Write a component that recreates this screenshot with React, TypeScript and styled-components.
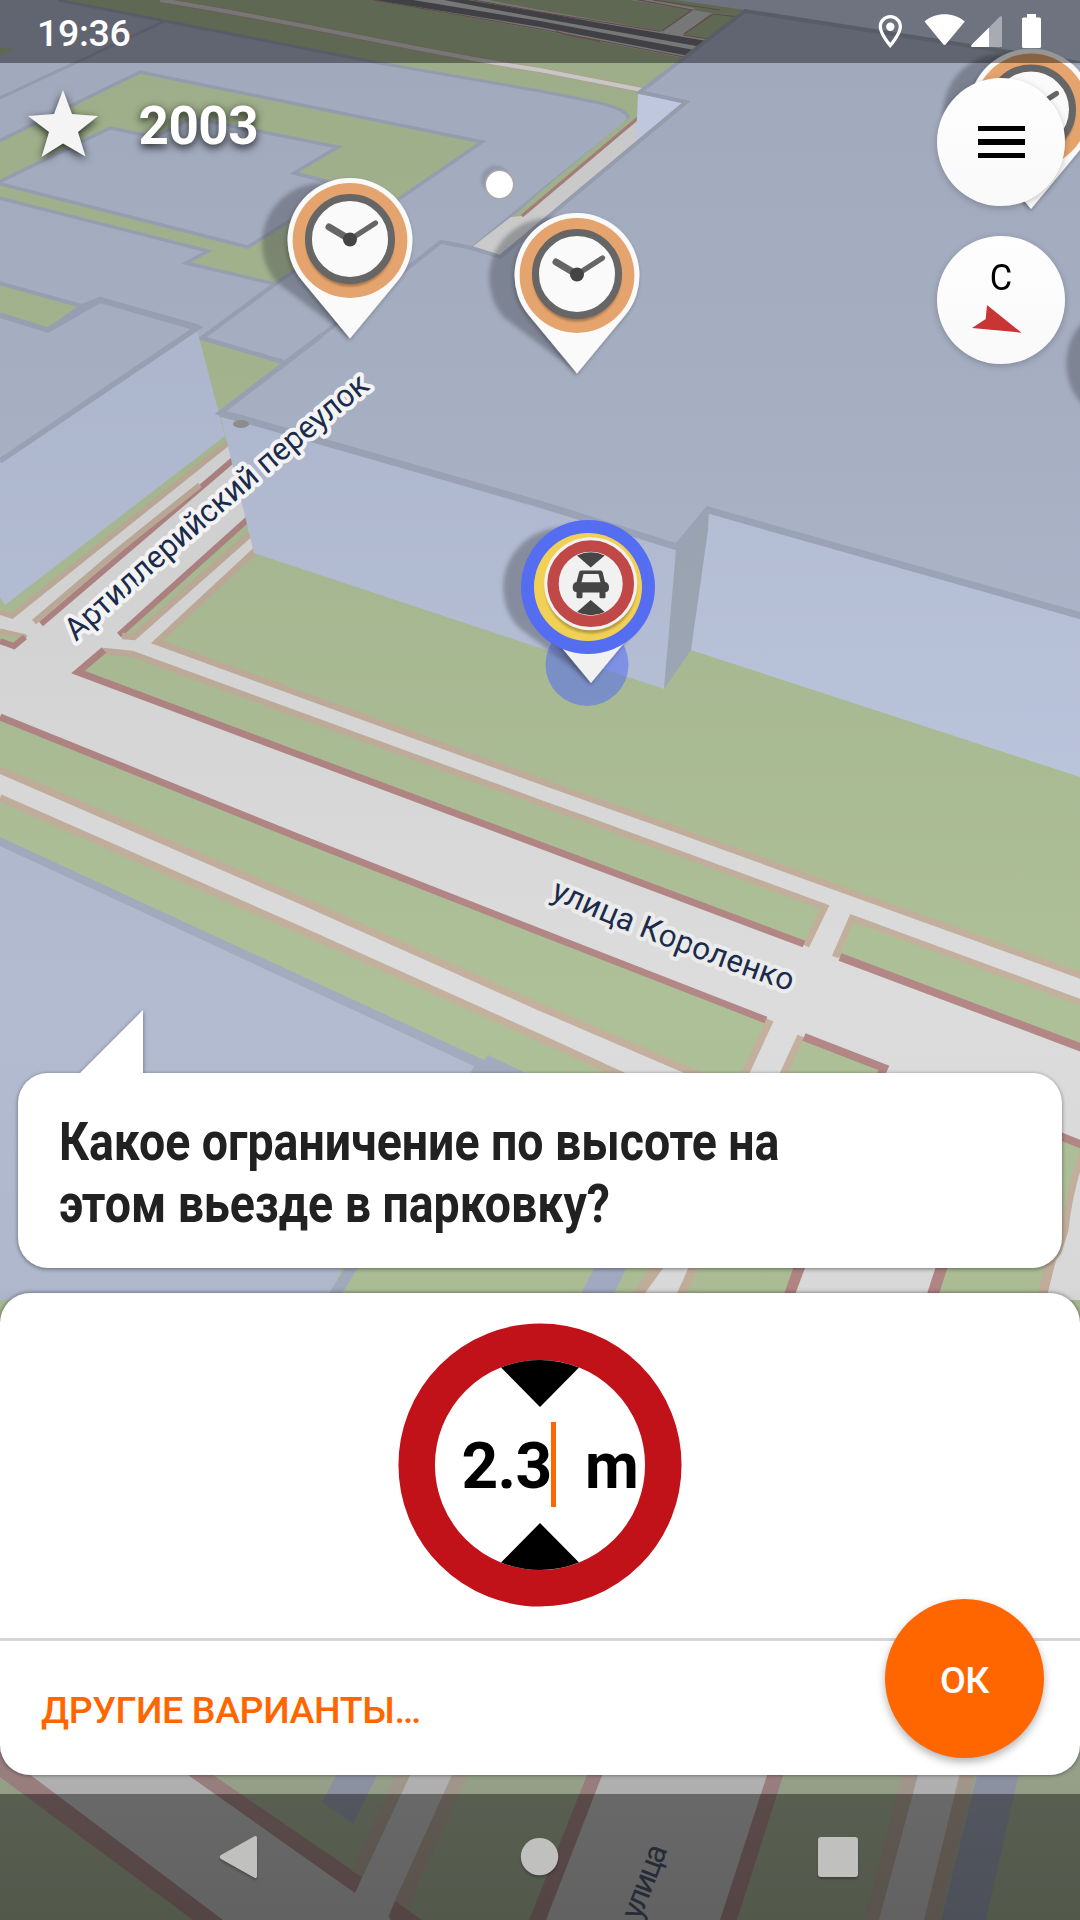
import React from "react";
import styled, { createGlobalStyle } from "styled-components";

const GlobalStyle = createGlobalStyle`
  *, *::before, *::after { box-sizing: border-box; }
  body { margin: 0; background: #aec098; }
`;

const color = {
  grass: "#aec098",
  road: "#dcdcdc",
  curb: "#b38786",
  walk: "#c3b09d",
  roof: "#b2bbd0",
  roofEdge: "#a3abbf",
  wall: "#bac4dc",
  wallFar: "#bec8e0",
  water: "#a3acc4",
  accent: "#ff6600",
};

const Screen = styled.main`
  position: relative;
  display: flex;
  flex-direction: column;
  width: 1080px;
  height: 1920px;
  overflow: hidden;
  font-family: Roboto, "Noto Sans", sans-serif;
  color: #212121;
`;

const MapCanvas = styled.svg`
  position: absolute;
  inset: 0;
  z-index: 0;
  width: 1080px;
  height: 1920px;
`;

const StatusBar = styled.header`
  position: relative;
  z-index: 1;
  display: flex;
  align-items: center;
  justify-content: space-between;
  flex: none;
  height: 63px;
  padding: 3px 38px 0 37px;
  background: rgba(0, 0, 0, 0.4);
  color: #fff;
`;

const Clock = styled.time`
  font-size: 37.5px;
  font-weight: 500;
  line-height: 60px;
  letter-spacing: -0.35px;
`;

const StatusIcons = styled.svg`
  width: 166px;
  height: 40px;
  margin-top: -3px;
`;

const Hud = styled.section`
  position: relative;
  z-index: 1;
  display: flex;
  justify-content: space-between;
  align-items: flex-start;
  padding: 15px 15px 0 20px;
`;

const Score = styled.div`
  display: flex;
  align-items: center;
  gap: 31.5px;
  height: 96px;
`;

const StarIcon = styled.svg`
  width: 87px;
  height: 96px;
  overflow: visible;
  filter: drop-shadow(0 3px 4px rgba(0, 0, 0, 0.75));
`;

const ScoreValue = styled.span`
  font-size: 53px;
  font-weight: 700;
  line-height: 96px;
  color: #fff;
  letter-spacing: -0.5px;
  text-shadow: 0 3px 8px rgba(0, 0, 0, 0.85);
`;

const Controls = styled.div`
  display: flex;
  flex-direction: column;
  gap: 30px;
`;

const RoundButton = styled.button`
  display: flex;
  flex-direction: column;
  align-items: center;
  justify-content: center;
  width: 128px;
  height: 128px;
  padding: 0;
  border: 0;
  border-radius: 50%;
  background: linear-gradient(#fefefe, #f9f9f9);
  box-shadow: 0 2px 7px rgba(0, 0, 0, 0.22);
  color: #000;
`;

const MenuBars = styled.span`
  display: flex;
  flex-direction: column;
  gap: 8px;
  width: 47px;
`;

const Bar = styled.span`
  height: 5.4px;
  background: #000;
`;

const North = styled.span`
  font: 400 37px/38px Roboto, sans-serif;
  transform: scaleX(0.93);
`;

const Needle = styled.svg`
  width: 54px;
  height: 36px;
  margin: 4px 0;
  overflow: visible;
`;

const Dialog = styled.section`
  position: relative;
  z-index: 1;
  display: flex;
  flex-direction: column;
  gap: 24.5px;
  margin-top: auto;
  margin-bottom: 19px;
`;

const Bubble = styled.div`
  position: relative;
  height: 195px;
  margin: 0 18px;
  padding: 38px 41px;
  border-radius: 30px;
  background: #fff;
  filter: drop-shadow(0 1px 2px rgba(0, 0, 0, 0.45));

  &::before {
    content: "";
    position: absolute;
    left: 61px;
    bottom: calc(100% - 1px);
    width: 64px;
    height: 64px;
    background: #fff;
    clip-path: polygon(100% 0, 100% 100%, 0 100%);
  }
`;

const Question = styled.h1`
  margin: 0;
  width: 1060px;
  font-size: 54px;
  font-weight: 700;
  line-height: 62px;
  white-space: pre-line;
  transform: scaleX(0.86);
  transform-origin: left;
`;

const Panel = styled.div`
  position: relative;
  display: flex;
  flex-direction: column;
  height: 482.5px;
  border-radius: 30px;
  background: #fff;
  box-shadow: 0 0 4px rgba(0, 0, 0, 0.5);
`;

const Answer = styled.div`
  display: flex;
  justify-content: center;
  height: 348.5px;
  padding-top: 30.5px;
  border-bottom: 3px solid #d6d6d6;
`;

const Sign = styled.div`
  display: grid;
  width: 284px;
  height: 284px;

  > * {
    grid-area: 1 / 1;
  }
`;

const Reading = styled.div`
  display: flex;
  align-items: center;
  padding-left: 63.5px;
  font-size: 64px;
  font-weight: 700;
  color: #000;
  white-space: pre;
`;

const Figure = styled.span`
  width: 89px;
  padding-top: 2px;
  letter-spacing: -0.6px;
`;

const Caret = styled.i`
  width: 5px;
  height: 85px;
  margin: -1px 29px 0 0;
  background: ${color.accent};
`;

const Unit = styled.span`
  padding-top: 2px;
  transform: scaleX(0.97);
  transform-origin: left;
`;

const Footer = styled.div`
  display: flex;
  align-items: center;
  flex: 1;
  padding: 4px 41px 0;
`;

const TextButton = styled.button`
  padding: 0;
  border: 0;
  background: none;
  color: ${color.accent};
  font: 500 37.5px/48px Roboto, "Noto Sans", sans-serif;
  letter-spacing: -0.38px;
  white-space: nowrap;
`;

const ConfirmButton = styled.button`
  position: absolute;
  right: 36px;
  bottom: 17px;
  width: 159px;
  height: 159px;
  padding: 2px 0 0;
  border: 0;
  border-radius: 50%;
  background: ${color.accent};
  box-shadow: 0 4px 8px rgba(0, 0, 0, 0.3);
  color: #fff;
  font: 500 37.5px/48px Roboto, "Noto Sans", sans-serif;
  letter-spacing: -0.5px;
`;

const NavBar = styled.nav`
  position: relative;
  z-index: 1;
  flex: none;
  display: flex;
  justify-content: space-between;
  align-items: center;
  height: 126px;
  padding: 0 218px;
  background: rgba(0, 0, 0, 0.4);
`;

const NavIcon = styled.svg`
  width: 44px;
  height: 48px;
  fill: #c0c1be;
  filter: drop-shadow(0 2px 1px rgba(0, 0, 0, 0.25));
`;

type LineProps = { d: string; w?: number };

const Curb = ({ d, w = 7 }: LineProps) => (
  <path d={d} fill="none" stroke={color.curb} strokeWidth={w} />
);
const Walk = ({ d, w = 6.5 }: LineProps) => (
  <path d={d} fill="none" stroke={color.walk} strokeWidth={w} />
);
const Edge = ({ d, w = 5 }: LineProps) => (
  <path d={d} fill="none" stroke={color.roofEdge} strokeWidth={w} />
);
const Area = ({ d, c }: { d: string; c: string }) => <path d={d} fill={c} />;

const PinShadow = ({ x, y }: { x: number; y: number }) => (
  <path
    d={`M${x} ${y + 97}L${x - 73} ${y + 42}A60 60 0 1 1 ${x + 19} ${y - 35}Z`}
    fill="#30343c"
    opacity="0.34"
    filter="url(#soft)"
  />
);

const ClockPin = ({ x, y }: { x: number; y: number }) => (
  <g>
    <PinShadow x={x} y={y} />
    <g transform={`translate(${x} ${y})`}>
      <path
        d="M0 98L-48 40A62.5 62.5 0 1 1 48 40Z"
        fill="#fafafa"
        filter="url(#lift)"
      />
      <circle r="57.4" fill="#e5a46d" />
      <circle cy="2" r="44" fill="#a8774f" filter="url(#soft1)" />
      <circle cy="-1.5" r="41.5" fill="#fafafa" stroke="#666" strokeWidth="7" />
      <path d="M0-1L-21-13.500" stroke="#666" strokeWidth="7" strokeLinecap="round" />
      <path d="M0-1L25.500-17.500" stroke="#666" strokeWidth="5.200" strokeLinecap="round" />
      <circle cy="-1" r="7" fill="#444" />
    </g>
  </g>
);

const QuestPin = () => (
  <g>
    <circle cx="587" cy="664.500" r="41.500" fill="#536df0" opacity="0.55" />
    <PinShadow x={591} y={585} />
    <path d="M591 683L543 625H639Z" fill="#f1f1f1" filter="url(#lift)" />
    <circle cx="588" cy="587" r="67" fill="#556df1" />
    <circle cx="588" cy="587" r="54" fill="#f1d155" />
    <circle cx="591" cy="588" r="45.500" fill="#b79c3d" filter="url(#soft1)" />
    <circle cx="590.700" cy="583.700" r="46.500" fill="#f1f1f1" />
    <circle cx="590.700" cy="583.700" r="37.700" fill="#f1f1f1" stroke="#c04948" strokeWidth="11.400" />
    <path d="M577 555.500A32 32 0 0 1 604.700 555.500L590.700 567.500Z" fill="#454545" />
    <path d="M577 612A32 32 0 0 0 604.700 612L590.700 600Z" fill="#454545" />
    <path
      fillRule="evenodd"
      d="M581 570.500H600.500Q602 570.500 602.700 572.500L605 582Q609 582.500 609 587.500Q609 592 605.500 592V597.500Q605.500 598.200 604 598.200H601Q599.500 598.200 599.500 597V592.500H582.500V597Q582.500 598.200 581 598.200H578Q576.500 598.200 576.500 597V592Q572.700 592 572.700 587.500Q572.700 582.500 576.500 582L579 572.500Q579.500 570.500 581 570.500ZM583.500 574L581.500 582.300H600.500L598.500 574Z"
      fill="#454545"
    />
  </g>
);

const labelStyle = {
  fontFamily: "Roboto, sans-serif",
  fontSize: 31.5,
  fill: "#1b2b4b",
  stroke: "#f3f3f3",
  strokeWidth: 8,
  strokeLinejoin: "round" as const,
  paintOrder: "stroke" as const,
};

const MapView = () => (
  <MapCanvas viewBox="0 0 1080 1920">
    <defs>
      <linearGradient id="shade" x1="0" y1="0" x2="0" y2="1920" gradientUnits="userSpaceOnUse">
        <stop offset="0" stopOpacity="0.1" />
        <stop offset="0.2" stopOpacity="0.07" />
        <stop offset="0.52" stopOpacity="0" />
        <stop offset="0.67" stopOpacity="0.02" />
        <stop offset="0.8" stopColor="#717171" stopOpacity="0.4" />
        <stop offset="0.925" stopColor="#717171" stopOpacity="0.41" />
        <stop offset="1" stopColor="#585858" stopOpacity="0.43" />
      </linearGradient>
      <filter id="soft" x="-20%" y="-20%" width="140%" height="140%">
        <feGaussianBlur stdDeviation="2" />
      </filter>
      <filter id="soft1">
        <feGaussianBlur stdDeviation="1" />
      </filter>
      <filter id="lift" x="-20%" y="-20%" width="140%" height="140%">
        <feDropShadow dx="-1" dy="2" stdDeviation="2" floodOpacity="0.28" />
      </filter>
      <path id="lane" d="M76 642Q240 494 376 384" />
      <path id="street" d="M550 898Q663 949 804 996" />
      <path id="side" d="M640 1921L672 1838" />
    </defs>

    <rect width="1080" height="1920" fill={color.grass} />

    {/* far streets */}
    <Area c={color.road} d="M374 0L540 30L684 58L708 39L540 10L468-4Z" />
    <Area c="#76777f" d="M374 0H413L540 21L694 50L689 56L540 27Z" />
    <Area c="#76777f" d="M444 0H468L540 12L600 23L707 41L702 47L540 18Z" />
    <Curb w={1} d="M374 0L540 29L684 57M468-1L540 12L708 39M555 30C565 37 580 36 600 42" />
    <Area c={color.road} d="M660 32L695 8L630-4V0L717 14L738 16L710 14L682 36Z" />
    <Curb w={1.2} d="M662 31L692 10L628-2M684 34L713 14L740 17M653 0L720 10" />
    <path d="M160 0C300 22 440 56 540 70L642 90" fill="none" stroke={color.walk} strokeWidth="6" />
    <path d="M160 0C300 22 440 56 540 70L642 90" fill="none" stroke={color.road} strokeWidth="4" />

    {/* left quarter with courtyards */}
    <Area c={color.roof} d="M0 0H58L379 62L540 90L600 103Q640 113 623 125L472 248L441 300L283 362L203 338L0 605Z" />
    <Edge w={3} d="M58 0L379 63L540 91L600 103Q640 113 623 125L540 192L472 248M0 98L165 21" />
    <Area c={color.grass} d="M0 47L15 49L0 56Z" />
    <path
      d="M-5 143L140 72L482 142L275 284L186 263L208 251L-5 197Z"
      fill={color.grass}
      stroke={color.roofEdge}
      strokeWidth="3.500"
    />
    <path
      d="M-3 183L110 128L155 137L192 118L338 147L294 173L345 186L248 247L-3 183Z"
      fill={color.roof}
      stroke={color.roofEdge}
      strokeWidth="3.500"
    />
    <path d="M-5 282L82 306L48 330L-5 313Z" fill={color.grass} stroke={color.roofEdge} strokeWidth="4" />
    <Area c={color.grass} d="M199 338L283 362L217 417L232 470L221 430Z" />
    <Edge w={4.5} d="M275 284L202 338L283 362M82 306L100 299L199 327" />

    {/* diagonal street */}
    <Area c={color.grass} d="M638 110L540 192L515 215L525 214L640 118Z" />
    <Area c={color.road} d="M638 120L523 216L511 217L472 247L500 256L540 222L640 142Z" />
    <Curb w={3} d="M638 118L522 216" />

    {/* main street and its pavements */}
    <Area
      c={color.road}
      d="M0 614L12 617L227 442L260 470L253 553L157 642L540 781L650 820L1080 975V1300H700L620 1072L540 1037L0 797Z"
    />
    <Area c={color.grass} d="M0 611L12 615L228 442L223 432L0 600Z" />
    <Walk d="M0 612L12 616L229 442" w={5.5} />
    <Curb d="M41 624L233 460" w={6} />
    <Walk d="M34 622L120 549L200 485" w={6} />
    <Area c={color.grass} d="M119 635L133 637L249 534L247 518Z" />
    <Curb d="M119 635L248 519" w={6} />
    <Walk d="M122 636L134 637L250 534M255 551L157 642L540 781L650 820L1085 977" />
    <Area c={color.grass} d="M0 631L28 636L14 647L0 641Z" />
    <Walk d="M0 631L26 637" w={5} />
    <Curb d="M0 641L14 646L25 637" w={6} />
    <Area c={color.grass} d="M78 672L103 651L132 654L540 803L826 907L806 945L540 844Z" />
    <Walk d="M103 651L132 654L540 803L582 818L825 907L806 946" />
    <Curb d="M804 944L540 845L78 672L104 650" />
    <Area c={color.grass} d="M851 918L1085 1004V1050L838 957Z" />
    <Walk d="M1085 1004L852 918L835 957" />
    <Curb d="M840 957L1085 1049" w={8} />
    <Area c={color.grass} d="M0 717L540 932L770 1021L742 1080H715L540 1008L0 770Z" />
    <Curb d="M0 717L300 838L540 932L766 1020" />
    <Walk d="M0 770L300 900L540 1007L710 1080M0 798L300 930L540 1038L640 1084M770 1020L740 1085" w={7.5} />
    <Area c={color.grass} d="M800 1036L883 1068L872 1090H776Z" />
    <Walk d="M801 1036L776 1090" w={7.5} />
    <Curb d="M804 1037L884 1068L874 1090" w={8} />
    <Area c={color.grass} d="M1055 1134L1080 1145V1160L1062 1240L1046 1290H1030Z" />
    <Curb d="M1055 1134L1085 1146" w={8} />
    <Walk d="M1083 1152Q1069 1190 1065 1230L1045 1292" w={7} />

    {/* lower left building */}
    <Area c={color.roof} d="M0 839L487 1062L525 1072V1200L344 1270L325 1300H0Z" />
    <Area c={color.roofEdge} d="M0 837L484 1060L488 1055L526 1073L470 1074L474 1066L0 846Z" />

    {/* front left building */}
    <Area c={color.roof} d="M0 313L48 330L100 299L200 327L0 470Z" />
    <Area c={color.wall} d="M197 330L225 436L5 605L0 597V462Z" />
    <Edge d="M0 315L48 330L100 300L197 328L0 461" w={5.5} />

    {/* large building on the right */}
    <Area c={color.wall} d="M220 414L690 500L678 550L664 689L540 648L254 553Z" />
    <Area c={color.wallFar} d="M708 508L1080 615V777L691 650Z" />
    <Area c="#a2acba" d="M676 550L709 508L708 530L691 650L664 689Z" />
    <Area
      c={color.roof}
      d="M744 10L1080 64V615L708 508L678 549L220 415L441 242L500 257L690 102L638 93Z"
    />
    <Area c="#cbd5eb" d="M676 0L745 10L1080 64V0Z" />
    <Area c="#d1dbf4" d="M638 94L686 102L636 142Z" />
    <Edge d="M1080 63L745 11L640 92L686 102L500 257L472 248L441 242L322 335" w={4} />
    <Edge d="M322 335L220 413L250 422" w={5} />
    <Edge d="M220 413L250 421L540 504L677 547L708 510L1085 617" w={7} />
    <ellipse cx="241" cy="424" rx="8" ry="4" fill="#969695" />

    {/* gap between the cards */}
    <Area c={color.grass} d="M344 1262H1054L1042 1298H330Z" />
    <Area c={color.roofEdge} d="M350 1260H363L338 1300H325Z" />
    <Area c={color.water} d="M598 1260H630L611 1300H578Z" />
    <Area c={color.walk} d="M656 1260H702L684 1300H628Z" />
    <Area c={color.road} d="M669 1260H692L674 1300H640Z" />
    <Area c={color.curb} d="M796 1260H950L937 1300H782Z" />
    <Area c={color.road} d="M808 1260H938L925 1300H793Z" />
    <Area c={color.walk} d="M1046 1260H1056L1046 1300H1036Z" />
    <Area c={color.road} d="M1056 1260L1080 1230V1300H1046Z" />

    {/* foreground beneath the answer card */}
    <rect y="1740" width="1080" height="180" fill={color.grass} />
    <Area c={color.curb} d="M0 1740H162L362 1877L345 1920H422L395 1901L388 1920H193L0 1777Z" />
    <Area c={color.road} d="M0 1752V1740H138L188 1775L355 1893L417 1760H459L388 1916L391 1920H223Z" />
    <Area c={color.walk} d="M395 1775H410L362 1877L352 1871ZM452 1775H467L408 1908L395 1901Z" />
    <Area c="#9fa8c3" d="M340 1768L380 1770L353 1824L322 1802Z" />
    <Area c={color.curb} d="M593 1760H788L737 1920H529Z" />
    <Area c={color.road} d="M608 1760H772L720 1920H546Z" />
    <Area c={color.walk} d="M906 1760H978L939 1920H864Z" />
    <Area c={color.road} d="M922 1760H963L924 1920H879Z" />
    <Area c="#9fa8c3" d="M981 1760H1022L986 1920H941Z" />

    <rect width="1080" height="1920" fill="url(#shade)" />

    {/* street names */}
    <text {...labelStyle} textLength="389">
      <textPath href="#lane">Артиллерийский переулок</textPath>
    </text>
    <text {...labelStyle} stroke="#ebebeb" textLength="258">
      <textPath href="#street">улица Короленко</textPath>
    </text>
    <text {...labelStyle} stroke="none" fill="#3f4a5e" textLength="77">
      <textPath href="#side">улица</textPath>
    </text>

    {/* map markers */}
    <circle cx="495.500" cy="180" r="14.500" fill="#555a66" opacity="0.22" filter="url(#soft1)" />
    <circle cx="499.500" cy="184.500" r="14.200" fill="#fff" stroke="#a8a8a8" strokeWidth="1.600" />
    <ClockPin x={1031} y={111} />
    <ClockPin x={350} y={240.5} />
    <ClockPin x={577} y={275.5} />
    <ClockPin x={1154} y={361} />
    <QuestPin />
  </MapCanvas>
);

const App = () => (
  <>
    <GlobalStyle />
    <Screen>
      <MapView />
      <StatusBar>
        <Clock>19:36</Clock>
        <StatusIcons viewBox="876 12 166 40" fill="#fff">
          <path
            fillRule="evenodd"
            d="M890.300 15C897 15 902 20.200 902 26.500C902 35 890.300 48 890.300 48S878.700 35 878.700 26.500C878.700 20.200 883.700 15 890.300 15ZM890.300 18.300C885.500 18.300 882 22 882 26.500C882 31.500 886.500 38 890.300 42.800C894 38 898.700 31.500 898.700 26.500C898.700 22 895 18.300 890.300 18.300Z"
          />
          <circle cx="890.300" cy="26.700" r="4.200" />
          <path d="M924.500 21.500C936 11.800 953 11.800 964.800 21.500L946 44Q944.600 46 943 44Z" />
          <path d="M1000 16.500Q1002 15 1002 18V45.500Q1002 47 1000.500 47H989V27.500Z" opacity="0.4" />
          <path d="M989 27.500V47H972.500Q970 47 971.700 44.800Z" />
          <path d="M1027 14H1036V17.500H1039.500Q1041 17.500 1041 19V46.500Q1041 48 1039.500 48H1023.500Q1022 48 1022 46.500V19Q1022 17.500 1023.500 17.500H1027Z" />
        </StatusIcons>
      </StatusBar>

      <Hud>
        <Score>
          <StarIcon viewBox="20 78 87 96">
            <path
              d="M63 90L72 114L98 116L78 132L85.500 156.500L63 143.500L41.500 157L49 132L28 116L54 114Z"
              fill="#f4f4f4"
            />
          </StarIcon>
          <ScoreValue>2003</ScoreValue>
        </Score>
        <Controls>
          <RoundButton aria-label="Меню">
            <MenuBars>
              <Bar />
              <Bar />
              <Bar />
            </MenuBars>
          </RoundButton>
          <RoundButton>
            <North>С</North>
            <Needle viewBox="974 302 54 36">
              <path d="M987 306L1021.500 333.700L972 329L985.700 320Z" fill="#c93434" />
            </Needle>
          </RoundButton>
        </Controls>
      </Hud>

      <Dialog>
        <Bubble>
          <Question>{"Какое ограничение по высоте на\nэтом вьезде в парковку?"}</Question>
        </Bubble>
        <Panel>
          <Answer>
            <Sign>
              <svg width="284" height="284" viewBox="-142 -142 284 284">
                <circle r="123.300" fill="#fff" stroke="#c1121a" strokeWidth="36.500" />
                <path d="M0-58L-39-97.500A105 105 0 0 1 39-97.500Z" />
                <path d="M0 58L-39 97.500A105 105 0 0 0 39 97.500Z" />
              </svg>
              <Reading>
                <Figure>2.3</Figure>
                <Caret />
                <Unit>m</Unit>
              </Reading>
            </Sign>
          </Answer>
          <Footer>
            <TextButton>ДРУГИЕ ВАРИАНТЫ…</TextButton>
          </Footer>
          <ConfirmButton>ОК</ConfirmButton>
        </Panel>
      </Dialog>

      <NavBar>
        <NavIcon viewBox="218 1833 44 48">
          <path d="M221 1855L254.500 1836.300Q257 1835 257 1838V1876Q257 1879 254.500 1877.700L221 1859Q218.500 1857 221 1855Z" />
        </NavIcon>
        <NavIcon viewBox="518 1833 44 48">
          <circle cx="539.500" cy="1856.600" r="18.700" />
        </NavIcon>
        <NavIcon viewBox="818 1833 44 48">
          <rect x="818" y="1837" width="40" height="40" rx="3" />
        </NavIcon>
      </NavBar>
    </Screen>
  </>
);

export default App;
